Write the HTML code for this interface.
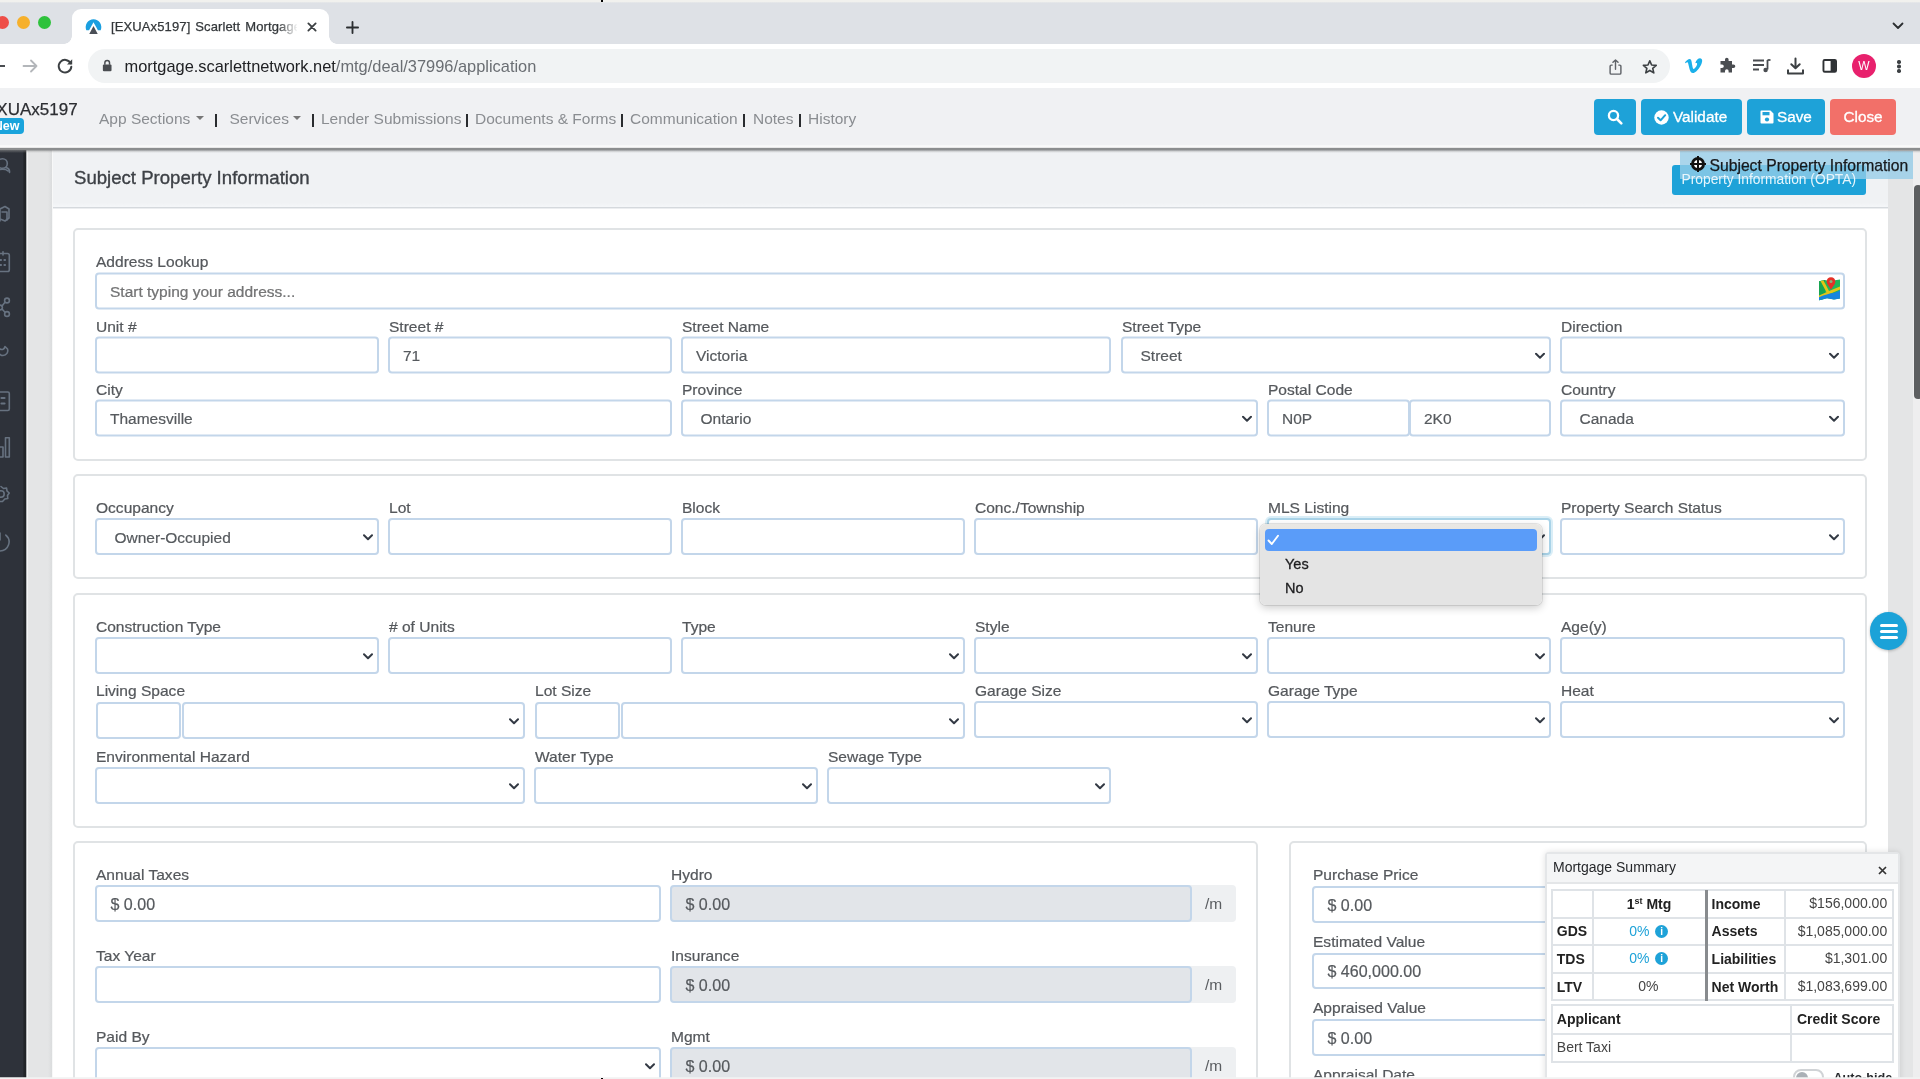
<!DOCTYPE html><html><head><meta charset="utf-8"><title>[EXUAx5197] Scarlett Mortgage</title><style>
*{box-sizing:border-box;margin:0;padding:0}
html,body{width:1920px;height:1079px;overflow:hidden;background:#fff}
body{will-change:transform;font-family:"Liberation Sans",sans-serif;position:relative;color:#555}
.a{position:absolute}
.lbl{position:absolute;font-size:15.55px;line-height:18px;color:#55585c;-webkit-text-stroke:.22px #55585c;white-space:nowrap;margin-top:.4px}
.in{position:absolute;background:#fff;border:2px solid #c3d6ea;border-radius:4px;font-size:15.5px;color:#565a5e;-webkit-text-stroke:.2px #565a5e;line-height:18px;white-space:nowrap;overflow:hidden}
.in span{position:absolute;left:13px;top:50%;transform:translateY(-50%);margin-top:.8px}
.in span.num{font-size:16.05px;left:13.5px;margin-top:0}
.in.sel span{left:17.5px}
.in.dis{background:#e2e5e9}
.chev{position:absolute;right:4px;top:50%;width:10px;height:7px;margin-top:-3px}
.fs{position:absolute;border:2px solid #e0e3e5;border-radius:5px;background:#fff}
.btn{position:absolute;border-radius:4px;color:#fff;-webkit-text-stroke:.3px #fff;font-size:15.3px;line-height:36px;text-align:center;white-space:nowrap}
.nav{position:absolute;font-size:15.5px;line-height:18px;color:#8a8d91;white-space:nowrap;top:110px}
td,th{border:2px solid #dcdfe2;font-size:14px;color:#222;height:27.5px;padding:0 3.5px 1px 4px;white-space:nowrap;line-height:16px}
</style></head><body>
<div class="a" style="left:0;top:0;width:1920px;height:44px;background:#dee1e6"></div>
<div class="a" style="left:0;top:0;width:1920px;height:2.6px;background:linear-gradient(#f1f1ee 1.6px,#dee1e6)"></div>
<div class="a" style="left:601px;top:0;width:2.2px;height:2px;background:#000"></div>
<div class="a" style="left:72px;top:9px;width:257px;height:36px;background:#fff;border-radius:9px 9px 0 0"></div>
<div class="a" style="left:64px;top:36px;width:8px;height:8px;background:radial-gradient(circle at 0 0,#dee1e6 7.5px,#fff 8px)"></div>
<div class="a" style="left:329px;top:36px;width:8px;height:8px;background:radial-gradient(circle at 100% 0,#dee1e6 7.5px,#fff 8px)"></div>
<div class="a" style="left:-4.5px;top:16px;width:13px;height:13px;border-radius:50%;background:#ee4e48"></div>
<div class="a" style="left:16.5px;top:16px;width:13px;height:13px;border-radius:50%;background:#f6b02b"></div>
<div class="a" style="left:37.8px;top:16px;width:13px;height:13px;border-radius:50%;background:#2ec23c"></div>
<svg class="a" style="left:83.5px;top:17px" width="19" height="19" viewBox="0 0 18 18"><path d="M2.2 12.5 A7.4 7.4 0 1 1 15.8 12.5 L13.2 12.5 L9 5 L4.8 12.5 Z" fill="#1a9fe0"/><path d="M9 8.5 L13 16 L5 16 Z" fill="#4a4f57"/></svg>
<div class="a" style="left:111px;top:18px;width:186px;height:18px;overflow:hidden;font-size:13px;line-height:18px;color:#33373a;white-space:nowrap;letter-spacing:.12px;word-spacing:1.2px;-webkit-text-stroke:.25px #33373a">[EXUAx5197] Scarlett Mortgage</div>
<div class="a" style="left:278px;top:16px;width:20px;height:22px;background:linear-gradient(90deg,rgba(255,255,255,0),#fff)"></div>
<svg class="a" style="left:307px;top:21.5px" width="10" height="10" viewBox="0 0 11 11"><path d="M1.5 1.5 L9.5 9.5 M9.5 1.5 L1.5 9.5" stroke="#3c4043" stroke-width="2" stroke-linecap="round"/></svg>
<svg class="a" style="left:346px;top:20.5px" width="13" height="13" viewBox="0 0 14 14"><path d="M7 1 V13 M1 7 H13" stroke="#2b2e31" stroke-width="2" stroke-linecap="round"/></svg>
<svg class="a" style="left:1892px;top:22px" width="12" height="8" viewBox="0 0 12 8"><path d="M1.5 1.5 L6 6 L10.5 1.5" fill="none" stroke="#2b2e31" stroke-width="1.8" stroke-linecap="round" stroke-linejoin="round"/></svg>
<div class="a" style="left:0;top:44px;width:1920px;height:44px;background:#fff"></div>
<div class="a" style="left:88px;top:49px;width:1582px;height:34px;border-radius:17px;background:#f1f3f4"></div>
<div class="a" style="left:-4px;top:65px;width:9px;height:2px;background:#4a4d51"></div>
<svg class="a" style="left:22px;top:58px" width="17" height="16" viewBox="0 0 17 16"><path d="M1.5 8 H14.5 M9 2.5 L14.5 8 L9 13.5" fill="none" stroke="#b3b6ba" stroke-width="1.8" stroke-linecap="round" stroke-linejoin="round"/></svg>
<svg class="a" style="left:56px;top:57px" width="18" height="18" viewBox="0 0 18 18"><path d="M14.6 6.2 A6.3 6.3 0 1 0 15.3 9.8" fill="none" stroke="#3c4043" stroke-width="2" stroke-linecap="round"/><path d="M16.2 2.2 V7.4 H11 Z" fill="#3c4043"/></svg>
<svg class="a" style="left:102.3px;top:58.6px" width="10.4" height="13.4" viewBox="0 0 12 15"><rect x="1" y="6" width="10" height="8" rx="1.3" fill="#4a4d51"/><path d="M3.3 6.5 V4.2 A2.7 2.7 0 0 1 8.7 4.2 V6.5" fill="none" stroke="#4a4d51" stroke-width="1.7"/></svg>
<div class="a" style="left:124.5px;top:56px;font-size:16.4px;line-height:20px;color:#202124;white-space:nowrap">mortgage.scarlettnetwork.net<span style="color:#6a6e73">/mtg/deal/37996/application</span></div>
<svg class="a" style="left:1608px;top:58px" width="15" height="18" viewBox="0 0 15 19"><path d="M4.5 7.5 H3 A1.2 1.2 0 0 0 1.8 8.7 V15.8 A1.2 1.2 0 0 0 3 17 H12 A1.2 1.2 0 0 0 13.2 15.8 V8.7 A1.2 1.2 0 0 0 12 7.5 H10.5" fill="none" stroke="#5f6368" stroke-width="1.5"/><path d="M7.5 12 V2.2 M4.8 4.6 L7.5 2 L10.2 4.6" fill="none" stroke="#5f6368" stroke-width="1.5" stroke-linecap="round" stroke-linejoin="round"/></svg>
<svg class="a" style="left:1642.3px;top:58.6px" width="15.6" height="15.6" viewBox="0 0 18 18"><path d="M9 2 L11.1 6.9 L16.4 7.3 L12.4 10.8 L13.6 16 L9 13.2 L4.4 16 L5.6 10.8 L1.6 7.3 L6.9 6.9 Z" fill="none" stroke="#3c4043" stroke-width="1.9" stroke-linejoin="round"/></svg>
<svg class="a" style="left:1684px;top:57px" width="19" height="17" viewBox="0 0 19 17"><path d="M1 5.2 C2.6 3.4 4.2 2 5.6 2 C7.6 2 7.7 5 8.2 8 C8.6 10.4 9 12 9.7 12 C10.6 12 12.4 9.6 13 7.8 C13.5 6.2 12.6 5.6 11.2 6.3 C12.4 2.8 14.6 1 16.6 1.4 C18.6 1.8 18.6 4.4 17.2 7.4 C15.4 11.2 11.6 16 8.8 16 C6.4 16 5.6 12.6 4.8 9 C4.3 6.6 4 5.2 3.4 5.2 C2.9 5.2 2.2 5.8 1.6 6.2 Z" fill="#1ab0ea"/></svg>
<svg class="a" style="left:1718px;top:57px" width="18" height="18" viewBox="0 0 18 18"><path d="M7 2.5 A1.8 1.8 0 0 1 10.6 2.5 V4 H14 V7.4 H15.5 A1.8 1.8 0 0 1 15.5 11 H14 V15.5 H10.6 V14 A1.8 1.8 0 0 0 7 14 V15.5 H2.5 V11 H4 A1.8 1.8 0 0 0 4 7.4 H2.5 V4 H7 Z" fill="#4a4d51"/></svg>
<svg class="a" style="left:1752px;top:58px" width="19" height="16" viewBox="0 0 19 16"><path d="M1 2.5 H12 M1 7 H12 M1 11.5 H7" stroke="#4a4d51" stroke-width="1.8"/><path d="M15.5 2 V11.5" stroke="#4a4d51" stroke-width="1.8"/><circle cx="13.6" cy="12" r="2.2" fill="#4a4d51"/><path d="M15.5 2 H18.5" stroke="#4a4d51" stroke-width="1.8"/></svg>
<svg class="a" style="left:1786px;top:57px" width="19" height="19" viewBox="0 0 19 19"><path d="M9.5 1.5 V11 M5.3 7.2 L9.5 11.3 L13.7 7.2" fill="none" stroke="#3c4043" stroke-width="2" stroke-linecap="round" stroke-linejoin="round"/><path d="M2 12.5 V16.5 H17 V12.5" fill="none" stroke="#3c4043" stroke-width="2" stroke-linejoin="round"/></svg>
<svg class="a" style="left:1822px;top:59.2px" width="15.5" height="13.8" viewBox="0 0 17 16"><rect x="1.2" y="1.2" width="14.6" height="13.6" rx="1.5" fill="none" stroke="#2f3235" stroke-width="2.2"/><rect x="9.5" y="1.5" width="6" height="13" fill="#2f3235"/></svg>
<div class="a" style="left:1852px;top:54px;width:24px;height:24px;border-radius:50%;background:#e8216d;color:#fff;font-size:12px;line-height:24px;text-align:center">W</div>
<div class="a" style="left:1897.3px;top:60.4px;width:3.4px;height:3.4px;border-radius:50%;background:#3c4043;box-shadow:0 4.5px 0 #3c4043,0 9px 0 #3c4043"></div>
<div class="a" style="left:0;top:88px;width:1920px;height:57px;background:#f0f1f3;z-index:5"></div>
<div class="a" style="left:0;top:145px;width:1920px;height:3px;background:linear-gradient(#f6f7f7,#fafafa 60%,#d9dada);z-index:5"></div>
<div class="a" style="left:0;top:148px;width:1920px;height:2px;background:#8b8d8e;z-index:5"></div>
<div class="a" style="left:0;top:150px;width:1920px;height:3px;background:linear-gradient(rgba(120,122,124,.75),rgba(150,150,150,.25) 55%,rgba(150,150,150,0));z-index:5"></div>
<div class="a" style="z-index:6;left:-15px;top:100px;font-size:17px;line-height:20px;color:#2c2e32;white-space:nowrap;-webkit-text-stroke:.25px #2c2e32">EXUAx5197</div>
<div class="a" style="z-index:6;left:-14px;top:118.3px;width:38px;height:16.2px;border-radius:4px;background:#1aa4dc;color:#fff;font-size:12.5px;font-weight:bold;line-height:16px;text-align:right;padding-right:4.5px">New</div>
<div class="nav" style="z-index:6;left:99px">App Sections</div>
<div class="nav" style="z-index:6;left:229.5px">Services</div>
<div class="nav" style="z-index:6;left:321px">Lender Submissions</div>
<div class="nav" style="z-index:6;left:475px">Documents &amp; Forms</div>
<div class="nav" style="z-index:6;left:630px">Communication</div>
<div class="nav" style="z-index:6;left:753px">Notes</div>
<div class="nav" style="z-index:6;left:808px">History</div>
<div class="a" style="z-index:6;left:196px;top:116px;width:0;height:0;border-left:4px solid transparent;border-right:4px solid transparent;border-top:4px solid #777"></div>
<div class="a" style="z-index:6;left:293px;top:116px;width:0;height:0;border-left:4px solid transparent;border-right:4px solid transparent;border-top:4px solid #777"></div>
<div class="a" style="z-index:6;left:215px;top:113.5px;width:2px;height:13px;background:#2a2c2f"></div>
<div class="a" style="z-index:6;left:312px;top:113.5px;width:2px;height:13px;background:#2a2c2f"></div>
<div class="a" style="z-index:6;left:466px;top:113.5px;width:2px;height:13px;background:#2a2c2f"></div>
<div class="a" style="z-index:6;left:621px;top:113.5px;width:2px;height:13px;background:#2a2c2f"></div>
<div class="a" style="z-index:6;left:743px;top:113.5px;width:2px;height:13px;background:#2a2c2f"></div>
<div class="a" style="z-index:6;left:799px;top:113.5px;width:2px;height:13px;background:#2a2c2f"></div>
<div class="btn" style="z-index:6;left:1594px;top:98.5px;width:42px;height:36px;background:#1ea2d8"><svg style="position:absolute;left:13px;top:10px" width="16" height="16" viewBox="0 0 16 16"><circle cx="6.5" cy="6.5" r="4.6" fill="none" stroke="#fff" stroke-width="2.3"/><path d="M10 10 L14.3 14.3" stroke="#fff" stroke-width="2.6" stroke-linecap="round"/></svg></div>
<div class="btn" style="z-index:6;left:1641px;top:98.5px;width:101px;height:36px;background:#1ea2d8;text-align:left;padding-left:32px"><svg style="position:absolute;left:13px;top:11px" width="15" height="15" viewBox="0 0 15 15"><circle cx="7.5" cy="7.5" r="7.2" fill="#fff"/><path d="M4 7.8 L6.6 10.3 L11.2 5.2" fill="none" stroke="#1ea2d8" stroke-width="2" stroke-linecap="round" stroke-linejoin="round"/></svg>Validate</div>
<div class="btn" style="z-index:6;left:1747px;top:98.5px;width:78px;height:36px;background:#1ea2d8;text-align:left;padding-left:30px"><svg style="position:absolute;left:13px;top:11px" width="14" height="14" viewBox="0 0 14 14"><path d="M1.5 0.5 H10.5 L13.5 3.5 V12.5 A1 1 0 0 1 12.5 13.5 H1.5 A1 1 0 0 1 .5 12.5 V1.5 A1 1 0 0 1 1.5 .5 Z" fill="#fff"/><rect x="2.5" y="2" width="7" height="3.3" fill="#1ea2d8"/><circle cx="7" cy="9.5" r="2.1" fill="#1ea2d8"/></svg>Save</div>
<div class="btn" style="z-index:6;left:1830px;top:98.5px;width:66px;height:36px;background:#f27069">Close</div>
<div class="a" style="left:0;top:149px;width:1920px;height:930px;background:#e4e5e6"></div>
<div class="a" style="left:0;top:149px;width:25.5px;height:930px;background:linear-gradient(90deg,#2e323a 22.5px,#22252a 24px,#202326)"></div>
<div class="a" style="left:25.5px;top:149px;width:2.5px;height:930px;background:linear-gradient(90deg,#7f8286,#f5f6f6 55%,#f3f3f3)"></div>
<div class="a" style="left:47.5px;top:149px;width:4px;height:930px;background:linear-gradient(90deg,#e4e5e6,#dadcdd)"></div>
<div class="a" style="left:51.5px;top:149px;width:1836.5px;height:930px;background:#f7f8f8"></div>
<div class="a" style="left:53px;top:149px;width:1835px;height:930px;background:#fff"></div>
<div class="a" style="left:53px;top:149px;width:1835px;height:58px;background:linear-gradient(#f0f2f4 54px,#f4f6f8 57px)"></div>
<div class="a" style="left:53px;top:206.8px;width:1835px;height:1.5px;background:#d5d9dd"></div>
<div class="a" style="left:53px;top:208.3px;width:1835px;height:.8px;background:#eceef0"></div>
<div class="a" style="left:74px;top:166.5px;font-size:18.6px;line-height:22px;color:#3d4146;white-space:nowrap;-webkit-text-stroke:.35px #3d4146">Subject Property Information</div>
<div class="fs" style="left:73px;top:228px;width:1794px;height:233px"></div>
<div class="fs" style="left:73px;top:474px;width:1794px;height:105px"></div>
<div class="fs" style="left:73px;top:593px;width:1794px;height:235px"></div>
<div class="fs" style="left:73px;top:841px;width:1185px;height:300px"></div>
<div class="fs" style="left:1289px;top:841px;width:578px;height:300px"></div>
<div class="lbl" style="left:96px;top:253px;">Address Lookup</div>
<div class="in" style="left:95px;top:273px;width:1750px;height:37px;transform:translateY(-.5px);"><span><i style="font-style:normal;color:#777">Start typing your address...</i></span></div>
<svg class="a" style="left:1819px;top:277px" width="22" height="24" viewBox="0 0 22 24"><path d="M0 4.2 L6 3 L12 4.5 L16 3.2 L21 2.5 V21.5 L15 22.6 L8 21.3 L0 23.2 Z" fill="#1fb65a"/><path d="M0 4.2 L6 3 L6 21.8 L0 23.2 Z" fill="#17a551"/><path d="M1.5 4 L4.5 3.4 L10 14 L21 9.5 V12.5 L9.5 17.5 L0 21 V18.5 L7.5 15.2 Z" fill="#e3c516"/><path d="M0 20.3 C6 17.5 10 16.8 14 16 C17 15.3 19 14.5 21 13.2 V21.5 L15 22.6 L8 21.3 L0 23.2 Z" fill="#1785dd"/><path d="M12 0.3 C9.3 0.3 7.6 2.3 7.6 4.6 C7.6 7.3 10.4 9.6 12 12.8 C13.6 9.6 16.4 7.3 16.4 4.6 C16.4 2.3 14.7 0.3 12 0.3 Z" fill="#e53027"/><circle cx="12" cy="4.6" r="1.5" fill="#8fae7a"/></svg>
<div class="lbl" style="left:96px;top:317.5px;">Unit #</div>
<div class="in" style="left:95px;top:337px;width:284px;height:37px;transform:translateY(-.5px);"></div>
<div class="lbl" style="left:389px;top:317.5px;">Street #</div>
<div class="in" style="left:388px;top:337px;width:284px;height:37px;transform:translateY(-.5px);"><span>71</span></div>
<div class="lbl" style="left:682px;top:317.5px;">Street Name</div>
<div class="in" style="left:681px;top:337px;width:430px;height:37px;transform:translateY(-.5px);"><span>Victoria</span></div>
<div class="lbl" style="left:1122px;top:317.5px;">Street Type</div>
<div class="in sel" style="left:1121px;top:337px;width:430px;height:37px;transform:translateY(-.5px);"><span>Street</span><svg class="chev" viewBox="0 0 10 7"><path d="M1 1.2 L5 5.2 L9 1.2" fill="none" stroke="#333a44" stroke-width="2" stroke-linecap="round" stroke-linejoin="round"/></svg></div>
<div class="lbl" style="left:1561px;top:317.5px;">Direction</div>
<div class="in sel" style="left:1560px;top:337px;width:285px;height:37px;transform:translateY(-.5px);"><svg class="chev" viewBox="0 0 10 7"><path d="M1 1.2 L5 5.2 L9 1.2" fill="none" stroke="#333a44" stroke-width="2" stroke-linecap="round" stroke-linejoin="round"/></svg></div>
<div class="lbl" style="left:96px;top:381px;">City</div>
<div class="in" style="left:95px;top:400px;width:577px;height:37px;transform:translateY(-.5px);"><span>Thamesville</span></div>
<div class="lbl" style="left:682px;top:381px;">Province</div>
<div class="in sel" style="left:681px;top:400px;width:577px;height:37px;transform:translateY(-.5px);"><span>Ontario</span><svg class="chev" viewBox="0 0 10 7"><path d="M1 1.2 L5 5.2 L9 1.2" fill="none" stroke="#333a44" stroke-width="2" stroke-linecap="round" stroke-linejoin="round"/></svg></div>
<div class="lbl" style="left:1268px;top:381px;">Postal Code</div>
<div class="in" style="left:1267px;top:400px;width:143px;height:37px;transform:translateY(-.5px);"><span>N0P</span></div>
<div class="in" style="left:1409px;top:400px;width:142px;height:37px;transform:translateY(-.5px);"><span>2K0</span></div>
<div class="lbl" style="left:1561px;top:381px;">Country</div>
<div class="in sel" style="left:1560px;top:400px;width:285px;height:37px;transform:translateY(-.5px);"><span>Canada</span><svg class="chev" viewBox="0 0 10 7"><path d="M1 1.2 L5 5.2 L9 1.2" fill="none" stroke="#333a44" stroke-width="2" stroke-linecap="round" stroke-linejoin="round"/></svg></div>
<div class="lbl" style="left:96px;top:499px;">Occupancy</div>
<div class="in sel" style="left:95px;top:518px;width:284px;height:37px;"><span><b style="font-weight:normal;position:relative;top:1.2px">Owner-Occupied</b></span><svg class="chev" viewBox="0 0 10 7"><path d="M1 1.2 L5 5.2 L9 1.2" fill="none" stroke="#333a44" stroke-width="2" stroke-linecap="round" stroke-linejoin="round"/></svg></div>
<div class="lbl" style="left:389px;top:499px;">Lot</div>
<div class="in" style="left:388px;top:518px;width:284px;height:37px;"></div>
<div class="lbl" style="left:682px;top:499px;">Block</div>
<div class="in" style="left:681px;top:518px;width:284px;height:37px;"></div>
<div class="lbl" style="left:975px;top:499px;">Conc./Township</div>
<div class="in" style="left:974px;top:518px;width:284px;height:37px;"></div>
<div class="lbl" style="left:1268px;top:499px;">MLS Listing</div>
<div class="in sel" style="left:1267px;top:518px;width:284px;height:37px;border-color:#a9d3e8;box-shadow:0 0 0 2px rgba(150,205,232,.35)"><svg class="chev" viewBox="0 0 10 7"><path d="M1 1.2 L5 5.2 L9 1.2" fill="none" stroke="#333a44" stroke-width="2" stroke-linecap="round" stroke-linejoin="round"/></svg></div>
<div class="lbl" style="left:1561px;top:499px;">Property Search Status</div>
<div class="in sel" style="left:1560px;top:518px;width:285px;height:37px;"><svg class="chev" viewBox="0 0 10 7"><path d="M1 1.2 L5 5.2 L9 1.2" fill="none" stroke="#333a44" stroke-width="2" stroke-linecap="round" stroke-linejoin="round"/></svg></div>
<div class="lbl" style="left:96px;top:618px;">Construction Type</div>
<div class="in sel" style="left:95px;top:637px;width:284px;height:37px;"><svg class="chev" viewBox="0 0 10 7"><path d="M1 1.2 L5 5.2 L9 1.2" fill="none" stroke="#333a44" stroke-width="2" stroke-linecap="round" stroke-linejoin="round"/></svg></div>
<div class="lbl" style="left:389px;top:618px;"># of Units</div>
<div class="in" style="left:388px;top:637px;width:284px;height:37px;"></div>
<div class="lbl" style="left:682px;top:618px;">Type</div>
<div class="in sel" style="left:681px;top:637px;width:284px;height:37px;"><svg class="chev" viewBox="0 0 10 7"><path d="M1 1.2 L5 5.2 L9 1.2" fill="none" stroke="#333a44" stroke-width="2" stroke-linecap="round" stroke-linejoin="round"/></svg></div>
<div class="lbl" style="left:975px;top:618px;">Style</div>
<div class="in sel" style="left:974px;top:637px;width:284px;height:37px;"><svg class="chev" viewBox="0 0 10 7"><path d="M1 1.2 L5 5.2 L9 1.2" fill="none" stroke="#333a44" stroke-width="2" stroke-linecap="round" stroke-linejoin="round"/></svg></div>
<div class="lbl" style="left:1268px;top:618px;">Tenure</div>
<div class="in sel" style="left:1267px;top:637px;width:284px;height:37px;"><svg class="chev" viewBox="0 0 10 7"><path d="M1 1.2 L5 5.2 L9 1.2" fill="none" stroke="#333a44" stroke-width="2" stroke-linecap="round" stroke-linejoin="round"/></svg></div>
<div class="lbl" style="left:1561px;top:618px;">Age(y)</div>
<div class="in" style="left:1560px;top:637px;width:285px;height:37px;"></div>
<div class="lbl" style="left:96px;top:682px;">Living Space</div>
<div class="in" style="left:96px;top:702px;width:85px;height:37px;"></div>
<div class="in sel" style="left:182px;top:702px;width:343px;height:37px;"><svg class="chev" viewBox="0 0 10 7"><path d="M1 1.2 L5 5.2 L9 1.2" fill="none" stroke="#333a44" stroke-width="2" stroke-linecap="round" stroke-linejoin="round"/></svg></div>
<div class="lbl" style="left:535px;top:682px;">Lot Size</div>
<div class="in" style="left:535px;top:702px;width:85px;height:37px;"></div>
<div class="in sel" style="left:621px;top:702px;width:344px;height:37px;"><svg class="chev" viewBox="0 0 10 7"><path d="M1 1.2 L5 5.2 L9 1.2" fill="none" stroke="#333a44" stroke-width="2" stroke-linecap="round" stroke-linejoin="round"/></svg></div>
<div class="lbl" style="left:975px;top:682px;">Garage Size</div>
<div class="in sel" style="left:974px;top:701px;width:284px;height:37px;"><svg class="chev" viewBox="0 0 10 7"><path d="M1 1.2 L5 5.2 L9 1.2" fill="none" stroke="#333a44" stroke-width="2" stroke-linecap="round" stroke-linejoin="round"/></svg></div>
<div class="lbl" style="left:1268px;top:682px;">Garage Type</div>
<div class="in sel" style="left:1267px;top:701px;width:284px;height:37px;"><svg class="chev" viewBox="0 0 10 7"><path d="M1 1.2 L5 5.2 L9 1.2" fill="none" stroke="#333a44" stroke-width="2" stroke-linecap="round" stroke-linejoin="round"/></svg></div>
<div class="lbl" style="left:1561px;top:682px;">Heat</div>
<div class="in sel" style="left:1560px;top:701px;width:285px;height:37px;"><svg class="chev" viewBox="0 0 10 7"><path d="M1 1.2 L5 5.2 L9 1.2" fill="none" stroke="#333a44" stroke-width="2" stroke-linecap="round" stroke-linejoin="round"/></svg></div>
<div class="lbl" style="left:96px;top:748px;">Environmental Hazard</div>
<div class="in sel" style="left:95px;top:767px;width:430px;height:37px;"><svg class="chev" viewBox="0 0 10 7"><path d="M1 1.2 L5 5.2 L9 1.2" fill="none" stroke="#333a44" stroke-width="2" stroke-linecap="round" stroke-linejoin="round"/></svg></div>
<div class="lbl" style="left:535px;top:748px;">Water Type</div>
<div class="in sel" style="left:534px;top:767px;width:284px;height:37px;"><svg class="chev" viewBox="0 0 10 7"><path d="M1 1.2 L5 5.2 L9 1.2" fill="none" stroke="#333a44" stroke-width="2" stroke-linecap="round" stroke-linejoin="round"/></svg></div>
<div class="lbl" style="left:828px;top:748px;">Sewage Type</div>
<div class="in sel" style="left:827px;top:767px;width:284px;height:37px;"><svg class="chev" viewBox="0 0 10 7"><path d="M1 1.2 L5 5.2 L9 1.2" fill="none" stroke="#333a44" stroke-width="2" stroke-linecap="round" stroke-linejoin="round"/></svg></div>
<div class="lbl" style="left:96px;top:866px;">Annual Taxes</div>
<div class="in" style="left:95px;top:885px;width:566px;height:37px;"><span class="num">$ 0.00</span></div>
<div class="lbl" style="left:96px;top:947px;">Tax Year</div>
<div class="in" style="left:95px;top:966px;width:566px;height:37px;"></div>
<div class="lbl" style="left:96px;top:1028px;">Paid By</div>
<div class="in sel" style="left:95px;top:1047px;width:566px;height:37px;"><svg class="chev" viewBox="0 0 10 7"><path d="M1 1.2 L5 5.2 L9 1.2" fill="none" stroke="#333a44" stroke-width="2" stroke-linecap="round" stroke-linejoin="round"/></svg></div>
<div class="lbl" style="left:671px;top:866px;">Hydro</div>
<div class="a" style="left:1189px;top:885px;width:47px;height:37px;background:#eef0f2;border-radius:0 4px 4px 0;font-size:15.5px;line-height:37px;color:#5a5d61;padding-left:16px">/m</div>
<div class="in dis" style="left:670px;top:885px;width:522px;height:37px;"><span class="num">$ 0.00</span></div>
<div class="lbl" style="left:671px;top:947px;">Insurance</div>
<div class="a" style="left:1189px;top:966px;width:47px;height:37px;background:#eef0f2;border-radius:0 4px 4px 0;font-size:15.5px;line-height:37px;color:#5a5d61;padding-left:16px">/m</div>
<div class="in dis" style="left:670px;top:966px;width:522px;height:37px;"><span class="num">$ 0.00</span></div>
<div class="lbl" style="left:671px;top:1028px;">Mgmt</div>
<div class="a" style="left:1189px;top:1047px;width:47px;height:37px;background:#eef0f2;border-radius:0 4px 4px 0;font-size:15.5px;line-height:37px;color:#5a5d61;padding-left:16px">/m</div>
<div class="in dis" style="left:670px;top:1047px;width:522px;height:37px;"><span class="num">$ 0.00</span></div>
<div class="lbl" style="left:1313px;top:866px;">Purchase Price</div>
<div class="in" style="left:1312px;top:886px;width:300px;height:37px;"><span class="num">$ 0.00</span></div>
<div class="lbl" style="left:1313px;top:933px;">Estimated Value</div>
<div class="in" style="left:1312px;top:953px;width:300px;height:36px;"><span class="num">$ 460,000.00</span></div>
<div class="lbl" style="left:1313px;top:999px;">Appraised Value</div>
<div class="in" style="left:1312px;top:1019px;width:300px;height:37px;"><span class="num">$ 0.00</span></div>
<div class="lbl" style="left:1313px;top:1066px;">Appraisal Date</div>
<div class="a" style="left:1672px;top:165px;width:194px;height:30px;border-radius:3px;background:#1ea2d8"></div>
<div class="a" style="left:1680px;top:151px;width:233px;height:27.5px;background:rgba(150,205,232,.78)"></div>
<div class="a" style="left:1681.5px;top:171.5px;font-size:13.8px;line-height:16px;color:#e8f6fc;white-space:nowrap">Property Information (OPTA)</div>
<div class="a" style="left:1690.5px;top:157px;width:14px;height:14px;border-radius:50%;border:3px solid #111;background:#fff"><div style="position:absolute;left:-4px;top:3px;width:16px;height:2px;background:#111"></div><div style="position:absolute;left:3px;top:-4px;width:2px;height:16px;background:#111"></div></div>
<div class="a" style="left:1709.5px;top:155.5px;font-size:15.7px;line-height:20px;color:#17191c;white-space:nowrap;-webkit-text-stroke:.25px #17191c">Subject Property Information</div>
<div class="a" style="left:1913px;top:151px;width:7px;height:930px;background:#eeeeef"></div>
<div class="a" style="left:1913.5px;top:185px;width:8px;height:214px;border-radius:4px;background:#5c5e60"></div>
<svg class="a" style="left:-9px;top:157.0px" width="20" height="22" viewBox="0 0 20 22"><g fill="none" stroke="#677280" stroke-width="1.6" stroke-linecap="round" stroke-linejoin="round"><circle cx="11.5" cy="6.5" r="4.8"/><path d="M3 21 C3 14.5 7 12.3 11.5 12.3 C14.5 12.3 16 13 17 14 M14.5 10.5 C17.5 11 18.8 13 18.5 15.5"/></g></svg>
<svg class="a" style="left:-9px;top:203.0px" width="20" height="22" viewBox="0 0 20 22"><g fill="none" stroke="#677280" stroke-width="1.6" stroke-linecap="round" stroke-linejoin="round"><path d="M9 6 L14 3.5 L18 6 V15 L14 18 L9 16 Z M9 8 V18 H5"/><path d="M11 9 H16 V17"/></g></svg>
<svg class="a" style="left:-9px;top:251.0px" width="20" height="22" viewBox="0 0 20 22"><g fill="none" stroke="#677280" stroke-width="1.6" stroke-linecap="round" stroke-linejoin="round"><rect x="5" y="2.5" width="13.3" height="18" rx="1.8"/><path d="M9.5 9 H10 M13.5 9 H14 M9.5 14 H10 M13.5 14 H14" stroke-width="2.2"/><path d="M12 0.8 V4"/></g></svg>
<svg class="a" style="left:-9px;top:297.0px" width="20" height="22" viewBox="0 0 20 22"><g fill="none" stroke="#677280" stroke-width="1.6" stroke-linecap="round" stroke-linejoin="round"><circle cx="16" cy="3.5" r="2.4"/><circle cx="16" cy="17" r="2.4"/><circle cx="9" cy="10.5" r="2.4"/><path d="M11 9 L14 5.3 M11 12 L14 15.3"/></g></svg>
<svg class="a" style="left:-9px;top:341.0px" width="20" height="22" viewBox="0 0 20 22"><g fill="none" stroke="#677280" stroke-width="1.6" stroke-linecap="round" stroke-linejoin="round"><path d="M9 8 C11 9 13.5 8.5 14 5.5 L16.5 8 C17.5 11 15.5 14.5 12 14.5 C10.5 14.5 9.5 14 8.5 13"/></g></svg>
<svg class="a" style="left:-9px;top:390.0px" width="20" height="22" viewBox="0 0 20 22"><g fill="none" stroke="#677280" stroke-width="1.6" stroke-linecap="round" stroke-linejoin="round"><rect x="4" y="2" width="14.3" height="18.5" rx="1.5"/><path d="M10.5 8 H13.5 M10.5 13.5 H13.5" stroke-width="2.2"/></g></svg>
<svg class="a" style="left:-9px;top:436.0px" width="20" height="22" viewBox="0 0 20 22"><g fill="none" stroke="#677280" stroke-width="1.6" stroke-linecap="round" stroke-linejoin="round"><path d="M14.5 21 V1.8 H18.3 V21 Z M8 21 V11 H12 V21 Z"/></g></svg>
<svg class="a" style="left:-9px;top:483.0px" width="20" height="22" viewBox="0 0 20 22"><g fill="none" stroke="#677280" stroke-width="1.6" stroke-linecap="round" stroke-linejoin="round"><circle cx="10" cy="11" r="3.2"/><path d="M10 3.5 L12.5 5.5 L15.5 5 L16 8 L18.2 10 L16.5 12.5 L16.8 15.5 L13.8 16 L11.5 18.5 H8.5"/></g></svg>
<svg class="a" style="left:-9px;top:531.0px" width="20" height="22" viewBox="0 0 20 22"><g fill="none" stroke="#677280" stroke-width="1.6" stroke-linecap="round" stroke-linejoin="round"><path d="M14.8 4.1 A9 9 0 0 1 9 20 M9 2 V9"/></g></svg>
<div class="a" style="left:1869.5px;top:612px;width:37.5px;height:37.5px;border-radius:50%;background:#1ba2d8;box-shadow:0 1px 3px rgba(0,0,0,.25)"><div style="position:absolute;left:10px;top:11.5px;width:18px;height:3px;border-radius:2px;background:#fff;box-shadow:0 6px 0 #fff,0 12px 0 #fff"></div></div>
<div class="a" style="left:1260px;top:523.5px;width:282px;height:81px;border-radius:6px;background:linear-gradient(#eae8e4,#e4e4e4 12px);box-shadow:0 3px 9px rgba(0,0,0,.2),0 0 0 1px rgba(0,0,0,.09)"></div>
<div class="a" style="left:1265px;top:529px;width:272px;height:22px;border-radius:4px;background:#5a9cf9"></div>
<svg class="a" style="left:1267px;top:534px" width="13" height="12" viewBox="0 0 13 12"><path d="M1.5 6.5 L4.8 10 L11 1.8" fill="none" stroke="#fff" stroke-width="1.9" stroke-linecap="round" stroke-linejoin="round"/></svg>
<div class="a" style="left:1285px;top:555px;font-size:14.5px;line-height:18px;color:#1d1d1f;-webkit-text-stroke:.3px #1d1d1f">Yes</div>
<div class="a" style="left:1285px;top:579px;font-size:14.5px;line-height:18px;color:#1d1d1f;-webkit-text-stroke:.3px #1d1d1f">No</div>
<div class="a" style="left:1545px;top:851.5px;width:355px;height:240px;background:#fff;border:2px solid #e4e6e8;border-radius:4px;box-shadow:0 0 6px rgba(0,0,0,.12)"></div>
<div class="a" style="left:1547px;top:853.5px;width:351px;height:30.5px;background:#f4f5f6;border-bottom:2px solid #e4e6e8"></div>
<div class="a" style="left:1553px;top:858.3px;font-size:14px;line-height:18px;color:#26282b;white-space:nowrap">Mortgage Summary</div>
<svg class="a" style="left:1878px;top:865.5px" width="9" height="9" viewBox="0 0 9 9"><path d="M1 1 L8 8 M8 1 L1 8" stroke="#333" stroke-width="1.7"/></svg>
<div class="a" style="left:1550.6px;top:889.3px;width:342.9000000000001px;height:2px;background:#dfe3e7"></div>
<div class="a" style="left:1550.6px;top:916.5px;width:342.9000000000001px;height:2px;background:#dfe3e7"></div>
<div class="a" style="left:1550.6px;top:944.3px;width:342.9000000000001px;height:2px;background:#dfe3e7"></div>
<div class="a" style="left:1550.6px;top:971.8px;width:342.9000000000001px;height:2px;background:#dfe3e7"></div>
<div class="a" style="left:1550.6px;top:998.6px;width:342.9000000000001px;height:2px;background:#dfe3e7"></div>
<div class="a" style="left:1550.6px;top:889.3px;width:2px;height:111.30000000000007px;background:#dfe3e7"></div>
<div class="a" style="left:1591.5px;top:889.3px;width:2px;height:111.30000000000007px;background:#dfe3e7"></div>
<div class="a" style="left:1784.3px;top:889.3px;width:2px;height:111.30000000000007px;background:#dfe3e7"></div>
<div class="a" style="left:1891.5px;top:889.3px;width:2px;height:111.30000000000007px;background:#dfe3e7"></div>
<div class="a" style="left:1704.5px;top:889.5px;width:3px;height:111px;background:#888b8e"></div>
<div class="a" style="left:1550.6px;top:1004.3px;width:342.9000000000001px;height:2px;background:#dfe3e7"></div>
<div class="a" style="left:1550.6px;top:1032.8px;width:342.9000000000001px;height:2px;background:#dfe3e7"></div>
<div class="a" style="left:1550.6px;top:1060.9px;width:342.9000000000001px;height:2px;background:#dfe3e7"></div>
<div class="a" style="left:1550.6px;top:1004.3px;width:2px;height:58.600000000000136px;background:#dfe3e7"></div>
<div class="a" style="left:1789.9px;top:1004.3px;width:2px;height:58.600000000000136px;background:#dfe3e7"></div>
<div class="a" style="left:1891.5px;top:1004.3px;width:2px;height:58.600000000000136px;background:#dfe3e7"></div>
<div class="a" style="top:895.8px;font-size:14px;line-height:16px;color:#222;white-space:nowrap;font-weight:bold;left:1549px;width:200px;text-align:center;">1<sup style="font-size:9px;vertical-align:5px;line-height:0">st</sup> Mtg</div>
<div class="a" style="top:923.1999999999999px;font-size:14px;line-height:16px;color:#222;white-space:nowrap;font-weight:bold;left:1556.8px;">GDS</div>
<div class="a" style="top:950.8px;font-size:14px;line-height:16px;color:#222;white-space:nowrap;font-weight:bold;left:1556.8px;">TDS</div>
<div class="a" style="top:978.6px;font-size:14px;line-height:16px;color:#222;white-space:nowrap;font-weight:bold;left:1556.8px;">LTV</div>
<div class="a" style="top:922.5999999999999px;font-size:14px;line-height:16px;color:#1ea2d8;white-space:nowrap;left:1548.7px;width:200px;text-align:center;">0% <span style="display:inline-block;width:13px;height:13px;border-radius:50%;background:#1ea2d8;color:#fff;font-size:10px;line-height:13px;font-weight:bold;text-align:center;vertical-align:1px;margin-left:2px">i</span></div>
<div class="a" style="top:950.1999999999999px;font-size:14px;line-height:16px;color:#1ea2d8;white-space:nowrap;left:1548.7px;width:200px;text-align:center;">0% <span style="display:inline-block;width:13px;height:13px;border-radius:50%;background:#1ea2d8;color:#fff;font-size:10px;line-height:13px;font-weight:bold;text-align:center;vertical-align:1px;margin-left:2px">i</span></div>
<div class="a" style="top:978.2px;font-size:14px;line-height:16px;color:#444;white-space:nowrap;left:1548.3px;width:200px;text-align:center;">0%</div>
<div class="a" style="top:895.8px;font-size:14px;line-height:16px;color:#222;white-space:nowrap;font-weight:bold;left:1711.6px;">Income</div>
<div class="a" style="top:895.3px;font-size:14px;line-height:16px;color:#444;white-space:nowrap;left:1587.2px;width:300px;text-align:right;">$156,000.00</div>
<div class="a" style="top:923.1999999999999px;font-size:14px;line-height:16px;color:#222;white-space:nowrap;font-weight:bold;left:1711.6px;">Assets</div>
<div class="a" style="top:922.6999999999999px;font-size:14px;line-height:16px;color:#444;white-space:nowrap;left:1587.2px;width:300px;text-align:right;">$1,085,000.00</div>
<div class="a" style="top:950.8px;font-size:14px;line-height:16px;color:#222;white-space:nowrap;font-weight:bold;left:1711.6px;">Liabilities</div>
<div class="a" style="top:950.3px;font-size:14px;line-height:16px;color:#444;white-space:nowrap;left:1587.2px;width:300px;text-align:right;">$1,301.00</div>
<div class="a" style="top:978.6px;font-size:14px;line-height:16px;color:#222;white-space:nowrap;font-weight:bold;left:1711.6px;">Net Worth</div>
<div class="a" style="top:978.1px;font-size:14px;line-height:16px;color:#444;white-space:nowrap;left:1587.2px;width:300px;text-align:right;">$1,083,699.00</div>
<div class="a" style="top:1011.1px;font-size:14px;line-height:16px;color:#222;white-space:nowrap;font-weight:bold;left:1556.8px;">Applicant</div>
<div class="a" style="top:1011.1px;font-size:14px;line-height:16px;color:#222;white-space:nowrap;font-weight:bold;left:1797px;">Credit Score</div>
<div class="a" style="top:1038.8000000000002px;font-size:14px;line-height:16px;color:#444;white-space:nowrap;left:1556.8px;">Bert Taxi</div>
<div class="a" style="left:1793px;top:1069px;width:31px;height:17px;border-radius:8px;border:2px solid #d0d3d6;background:#fff"><div style="position:absolute;left:1px;top:1px;width:12px;height:12px;border-radius:50%;background:#aab0b6"></div></div>
<div class="a" style="left:1833.5px;top:1070px;font-size:12.6px;line-height:16px;color:#26282b;font-weight:bold;white-space:nowrap">Auto-hide</div>
<div class="a" style="left:0;top:1076.6px;width:1920px;height:3px;background:linear-gradient(rgba(242,242,242,.5),#f2f2f2 1px);z-index:20"></div>
<div class="a" style="left:601px;top:1077.8px;width:2.2px;height:2px;background:#000;z-index:21"></div>
</body></html>
